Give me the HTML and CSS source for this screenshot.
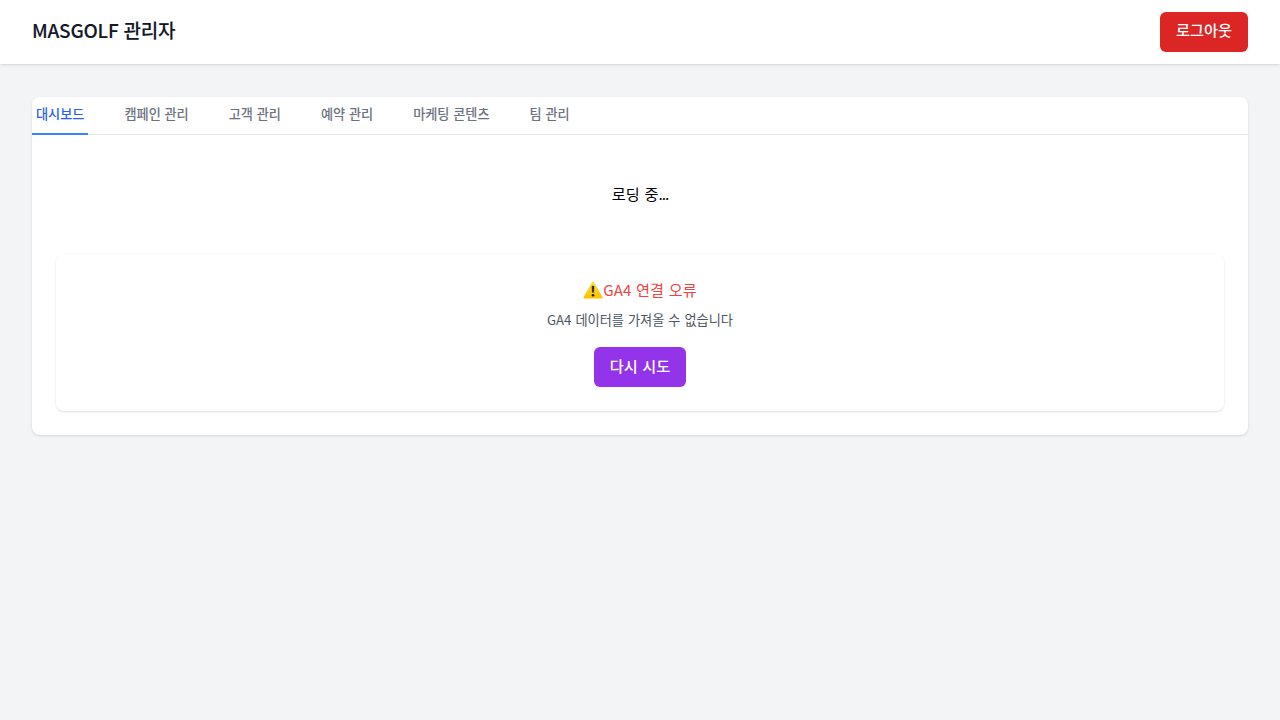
FILE: index.html
```html
<!DOCTYPE html>
<html lang="ko">
<head>
<meta charset="utf-8">
<title>MASGOLF 관리자</title>
<link rel="stylesheet" href="styles.css">
</head>
<body>
<header class="header">
  <h1 class="brand">MASGOLF 관리자</h1>
  <button class="btn btn-logout">로그아웃</button>
</header>
<main class="main">
  <section class="panel">
    <nav class="tabs">
      <button class="tab tab-active">대시보드</button>
      <button class="tab">캠페인 관리</button>
      <button class="tab">고객 관리</button>
      <button class="tab">예약 관리</button>
      <button class="tab">마케팅 콘텐츠</button>
      <button class="tab">팀 관리</button>
    </nav>
    <div class="content">
      <div class="loading">로딩 중<span class="dots">...</span></div>
      <div class="card">
        <div class="error-title"><svg class="warn" viewBox="0 0 20 18" aria-hidden="true"><defs><linearGradient id="amber" x1="0" y1="0" x2="0" y2="1"><stop offset="0" stop-color="#ffdc3c"/><stop offset="1" stop-color="#fcc200"/></linearGradient></defs><path d="M10 1.2 18.9 16.8H1.1Z" fill="url(#amber)" stroke="url(#amber)" stroke-width="1.6" stroke-linejoin="round"/><path d="M9.1 5.2h1.8l-.3 6.1H9.4Z" fill="#1c1c1c" stroke="#1c1c1c" stroke-width=".6" stroke-linejoin="round"/><circle cx="10" cy="14.2" r="1.3" fill="#1c1c1c"/></svg><span class="error-label">GA4 연결 오류</span></div>
        <div class="error-text">GA4 데이터를 가져올 수 없습니다</div>
        <button class="btn btn-retry">다시 시도</button>
      </div>
    </div>
  </section>
</main>
</body>
</html>
```
FILE: styles.css
```css
* { box-sizing: border-box; margin: 0; padding: 0; }
body {
  min-height: 100vh;
  background: #f3f4f6;
  color: #000;
  font-family: "Noto Sans CJK KR", sans-serif;
  font-size: 15.2px;
  line-height: 24px;
  word-spacing: .5px;
}
button { font: inherit; word-spacing: inherit; border: 0; background: none; cursor: pointer; }
.header {
  display: flex;
  align-items: center;
  justify-content: space-between;
  height: 64px;
  padding: 0 32px;
  background: #fff;
  box-shadow: 0 1px 3px rgba(0,0,0,.1), 0 1px 2px -1px rgba(0,0,0,.1);
}
.brand {
  padding-bottom: 4px;
  font-size: 19px;
  line-height: 28px;
  font-weight: 500;
  letter-spacing: -.25px;
  word-spacing: 0;
  color: #111827;
  -webkit-text-stroke: .1px #111827;
}
.btn { border-radius: 6px; color: #fff; font-weight: 500; }
.btn-logout { padding: 5px 16px 11px; background: #dc2626; }
.btn-retry { margin-top: 17px; padding: 6px 16px 10px; background: #9333ea; }
.main { padding: 33px 32px; }
.panel {
  background: #fff;
  border-radius: 8px;
  box-shadow: 0 1px 3px rgba(0,0,0,.1), 0 1px 2px -1px rgba(0,0,0,.1);
}
.tabs { display: flex; gap: 32px; border-bottom: 1px solid #e5e7eb; }
.tab {
  padding: 7px 4px 9px;
  margin-bottom: -1px;
  border-bottom: 2px solid transparent;
  color: #6b7280;
  font-size: 13.16px;
  line-height: 20px;
  font-weight: 500;
  word-spacing: .1px;
}
.tab-active { color: #2563eb; border-color: #3b82f6; }
.content { padding: 24px; }
.loading { padding: 22px 0 50px; text-align: center; }
.dots { letter-spacing: -1px; }
.card {
  padding: 23px 24px 24px;
  border-radius: 8px;
  text-align: center;
  box-shadow: 0 1px 3px rgba(0,0,0,.1), 0 1px 2px -1px rgba(0,0,0,.1);
}
.error-title { display: flex; justify-content: center; align-items: center; color: #ef4444; }
.error-label { margin: -1px 0 1px; }
.warn { width: 20px; height: 18px; }
.error-text { margin-top: 8px; font-size: 13.2px; line-height: 20px; word-spacing: .3px; color: #4b5563; }
```
